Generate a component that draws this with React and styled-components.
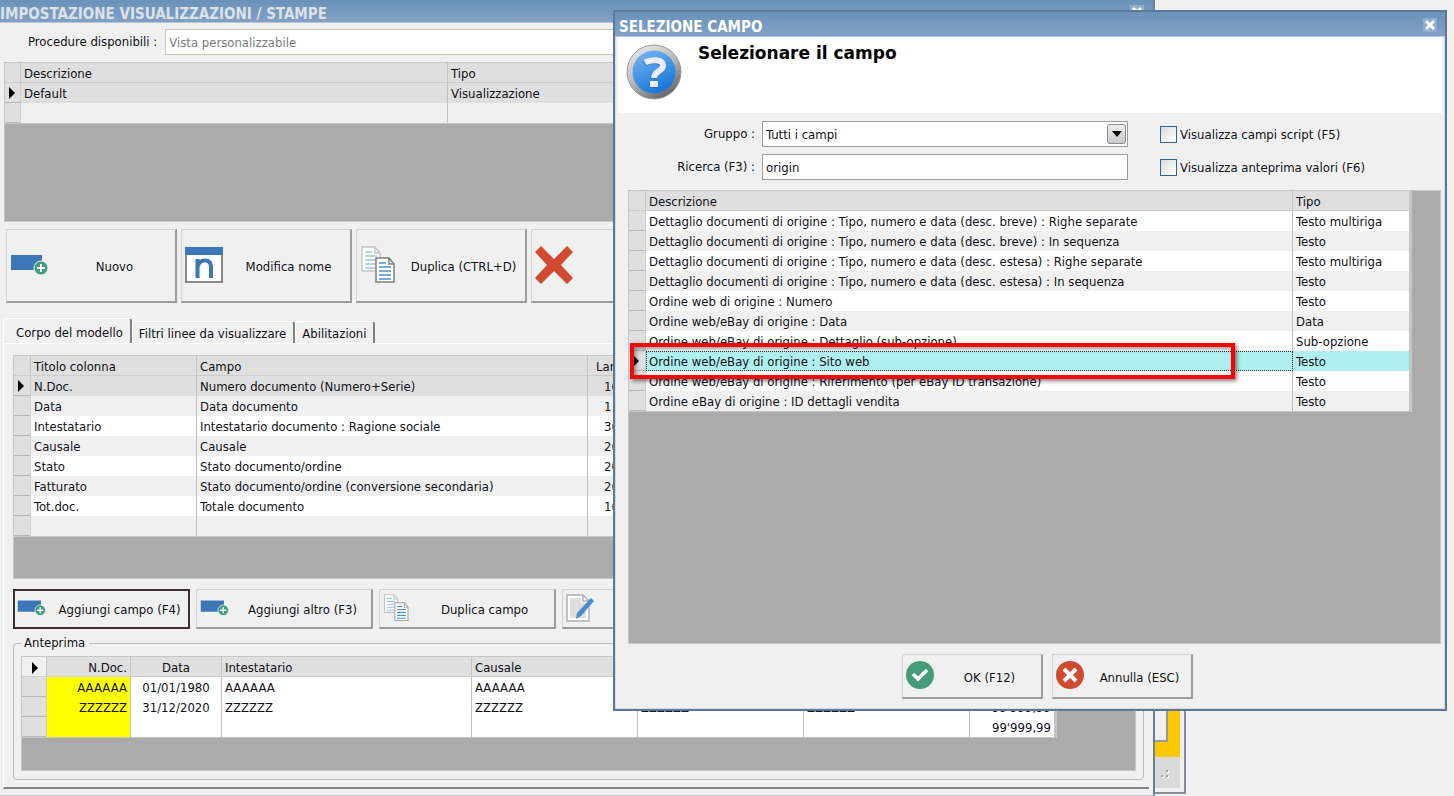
import React from 'react'
import styled, { createGlobalStyle } from 'styled-components'

const procedures = [{ descrizione: 'Default', tipo: 'Visualizzazione' }]

const columns = [
    { titolo: 'N.Doc.', campo: 'Numero documento (Numero+Serie)', largh: '10' },
    { titolo: 'Data', campo: 'Data documento', largh: '1' },
    { titolo: 'Intestatario', campo: 'Intestatario documento : Ragione sociale', largh: '30' },
    { titolo: 'Causale', campo: 'Causale', largh: '20' },
    { titolo: 'Stato', campo: 'Stato documento/ordine', largh: '20' },
    { titolo: 'Fatturato', campo: 'Stato documento/ordine (conversione secondaria)', largh: '20' },
    { titolo: 'Tot.doc.', campo: 'Totale documento', largh: '10' },
]

const preview = [
    ['AAAAAA', '01/01/1980', 'AAAAAA', 'AAAAAA', '', '', ''],
    ['ZZZZZZ', '31/12/2020', 'ZZZZZZ', 'ZZZZZZ', 'ZZZZZZ', 'ZZZZZZ', "99'999,99"],
    ['', '', '', '', '', '', "99'999,99"],
]

const fields = [
    ['Dettaglio documenti di origine : Tipo, numero e data (desc. breve) : Righe separate', 'Testo multiriga'],
    ['Dettaglio documenti di origine : Tipo, numero e data (desc. breve) : In sequenza', 'Testo'],
    ['Dettaglio documenti di origine : Tipo, numero e data (desc. estesa) : Righe separate', 'Testo multiriga'],
    ['Dettaglio documenti di origine : Tipo, numero e data (desc. estesa) : In sequenza', 'Testo'],
    ['Ordine web di origine : Numero', 'Testo'],
    ['Ordine web/eBay di origine : Data', 'Data'],
    ['Ordine web/eBay di origine : Dettaglio (sub-opzione)', 'Sub-opzione'],
    ['Ordine web/eBay di origine : Sito web', 'Testo'],
    ['Ordine web/eBay di origine : Riferimento (per eBay ID transazione)', 'Testo'],
    ['Ordine eBay di origine : ID dettagli vendita', 'Testo'],
]

const selectedField = 7

/* icons */

const AddIcon = ({ size = 40 }) => (
    <svg width={size} height={size * 0.6} viewBox="0 0 40 24" aria-hidden="true">
        <rect x="1" y="2" width="31" height="15" fill="#3c78b8" />
        <circle cx="31" cy="15" r="7" fill="#3f9c78" stroke="#f0f0f0" />
        <path d="M31 11v8M27 15h8" stroke="#fff" strokeWidth="2" />
    </svg>
)

const RenameIcon = () => (
    <svg width="38" height="36" viewBox="0 0 38 36" aria-hidden="true">
        <rect x="1" y="1" width="36" height="34" fill="#fff" stroke="#8a8a8a" strokeWidth="2" />
        <rect width="38" height="8" fill="#3c78b8" />
        <path
            d="M12.500 31V12M12.500 20C13.500 15 16.500 13.500 20 13.500C24.500 13.500 26 16 26 20V31"
            fill="none"
            stroke="#3c78b8"
            strokeWidth="4"
        />
    </svg>
)

const Sheet = ({ edge, ink }) => (
    <>
        <path d="M1 1h13l5 6v18H1z" fill="#fff" stroke={edge} strokeWidth="1.5" />
        <path d="M14 1v6h5" fill="none" stroke={edge} strokeWidth="1.5" />
        <path d="M4 6h7M4 10h12M4 14h12M4 18h12M4 22h12" stroke={ink} strokeWidth="1.5" />
    </>
)

const CopyIcon = ({ size = 36, edge = '#7f7f7f' }) => (
    <svg width={size} height={size} viewBox="0 0 36 38" aria-hidden="true">
        <Sheet edge="#c4c4c4" ink="#9cc3e8" />
        <g transform="translate(14 11)">
            <Sheet edge={edge} ink="#4f90cc" />
        </g>
    </svg>
)

const DeleteIcon = () => (
    <svg width="38" height="38" viewBox="0 0 38 38" aria-hidden="true">
        <path d="M6 0l13 13L32 0l6 6-12 13 12 13-6 6-13-13L6 38l-6-6 12-13L0 6z" fill="#cf4a2e" />
    </svg>
)

const EditIcon = () => (
    <svg width="28" height="28" viewBox="0 0 28 28" aria-hidden="true">
        <path d="M1 1h16l6 6v20H1z" fill="#fff" stroke="#b0b0b0" strokeWidth="1.5" />
        <path d="M4 4h11v5h5v15H4z" fill="#dedede" />
        <path d="M17 1v6h6" fill="none" stroke="#b0b0b0" strokeWidth="1.5" />
        <path d="M25 4l3 3-13 15-5 3 1-6z" fill="#4a8ac6" />
    </svg>
)

const QuestionIcon = () => (
    <svg width="56" height="56" viewBox="0 0 56 56" aria-hidden="true">
        <defs>
            <linearGradient id="ring" x1="0" y1="0" x2="0.6" y2="1">
                <stop offset="0" stopColor="#f4f4f4" />
                <stop offset="0.6" stopColor="#b4b4b4" />
                <stop offset="1" stopColor="#6a6a6a" />
            </linearGradient>
            <linearGradient id="ball" x1="0" y1="0" x2="0.5" y2="1">
                <stop offset="0" stopColor="#7db9f4" />
                <stop offset="1" stopColor="#1b78d8" />
            </linearGradient>
        </defs>
        <circle cx="28" cy="28" r="27" fill="url(#ring)" stroke="#9a9a9a" />
        <circle cx="28" cy="28" r="21.500" fill="url(#ball)" />
        <g fill="none" stroke="#1c62ae" strokeWidth="6" opacity="0.5" transform="translate(-1 1)">
            <path d="M19 18.500c5-3 18-4 18 3 0 6-9 5-9 12.500" />
            <path d="M24 40h8" />
        </g>
        <g fill="none" stroke="#ecebfb" strokeWidth="6">
            <path d="M19 18.500c5-3 18-4 18 3 0 6-9 5-9 12.500" />
            <path d="M24 40h8" />
        </g>
    </svg>
)

const OkIcon = () => (
    <svg width="28" height="28" viewBox="0 0 28 28" aria-hidden="true">
        <circle cx="14" cy="14" r="14" fill="#459c78" />
        <path d="M7 13l5 5 9-9" fill="none" stroke="#fff" strokeWidth="3.500" />
    </svg>
)

const CancelIcon = () => (
    <svg width="28" height="28" viewBox="0 0 28 28" aria-hidden="true">
        <circle cx="14" cy="14" r="14" fill="#cf4a2e" />
        <path d="M8 8l12 12M20 8L8 20" stroke="#fff" strokeWidth="4" />
    </svg>
)

const CloseIcon = () => (
    <svg width="14" height="14" viewBox="0 0 14 14" aria-hidden="true">
        <path d="M3 3l8 8M11 3l-8 8" stroke="#fff" strokeWidth="3" />
    </svg>
)

const Marker = () => (
    <MarkerSvg width="6" height="12" viewBox="0 0 6 12" aria-hidden="true">
        <path d="M0 0l6 6-6 6z" fill="#000" />
    </MarkerSvg>
)

const Grip = () => (
    <svg width="10" height="10" viewBox="0 0 10 10" aria-hidden="true">
        <path d="M1 7h2v2H1zM6 7h2v2H6zM6 2h2v2H6z" fill="#a5a5a5" />
        <path d="M3 8h1v2H2V9h1zM8 8h1v2H7V9h1zM8 3h1v2H7V4h1z" fill="#fff" />
    </svg>
)

const MainWindow = () => (
    <MainFrame>
        <TitleBar $muted>
            <Title $muted>IMPOSTAZIONE VISUALIZZAZIONI / STAMPE</Title>
            <CloseButton type="button" aria-label="Chiudi"><CloseIcon /></CloseButton>
        </TitleBar>
        <ProcedureRow>
            <label htmlFor="procedure">Procedure disponibili :</label>
            <TextInput id="procedure" $muted defaultValue="Vista personalizzabile" readOnly />
        </ProcedureRow>
        <GridArea $height={160} $margin="0 16px 0 4px">
            <Table $width={1110}>
                <colgroup>
                    <Col $w={16} /><Col $w={427} /><Col $w={667} />
                </colgroup>
                <thead>
                    <tr><Th /><Th>Descrizione</Th><Th>Tipo</Th></tr>
                </thead>
                <tbody>
                    {procedures.map((p) => (
                        <Row key={p.descrizione} $bg="#dfdfdf">
                            <RowHead><Marker /></RowHead>
                            <Td>{p.descrizione}</Td>
                            <Td>{p.tipo}</Td>
                        </Row>
                    ))}
                    <Row $bg="#f0f0f0"><RowHead /><Td /><Td /></Row>
                </tbody>
            </Table>
        </GridArea>
        <Toolbar>
            <PushButton type="button" $tall><AddIcon /><span>Nuovo</span></PushButton>
            <PushButton type="button" $tall><RenameIcon /><span>Modifica nome</span></PushButton>
            <PushButton type="button" $tall><CopyIcon size={38} /><span>Duplica (CTRL+D)</span></PushButton>
            <PushButton type="button" $tall aria-label="Elimina"><DeleteIcon /></PushButton>
        </Toolbar>
        <Tabs role="tablist">
            <Tab type="button" role="tab" aria-selected="true" $active>Corpo del modello</Tab>
            <Tab type="button" role="tab" aria-selected="false">Filtri linee da visualizzare</Tab>
            <Tab type="button" role="tab" aria-selected="false">Abilitazioni</Tab>
        </Tabs>
        <TabPanel role="tabpanel">
            <GridArea $height={224} $margin="0 4px 0 0">
                <Table $width={1100}>
                    <colgroup>
                        <Col $w={17} /><Col $w={166} /><Col $w={391} /><Col $w={48} /><Col $w={478} />
                    </colgroup>
                    <thead>
                        <tr><Th /><Th>Titolo colonna</Th><Th>Campo</Th><Th $pad={8}>Largh.</Th><Th /></tr>
                    </thead>
                    <tbody>
                        {columns.map((c, i) => (
                            <Row key={c.titolo} $bg={i === 0 ? '#dfdfdf' : i % 2 ? '#f0f0f0' : '#fff'}>
                                <RowHead>{i === 0 && <Marker />}</RowHead>
                                <Td>{c.titolo}</Td>
                                <Td>{c.campo}</Td>
                                <Td $pad={16}>{c.largh}</Td>
                                <Td />
                            </Row>
                        ))}
                        <Row $bg="#f0f0f0"><RowHead /><Td /><Td /><Td /><Td /></Row>
                    </tbody>
                </Table>
            </GridArea>
            <FieldToolbar>
                <PushButton type="button" $focused><AddIcon size={30} /><span>Aggiungi campo (F4)</span></PushButton>
                <PushButton type="button"><AddIcon size={30} /><span>Aggiungi altro (F3)</span></PushButton>
                <PushButton type="button"><CopyIcon size={28} edge="#a8a8a8" /><span>Duplica campo</span></PushButton>
                <PushButton type="button" aria-label="Modifica campo"><EditIcon /></PushButton>
            </FieldToolbar>
            <PreviewBox>
                <PreviewLegend>Anteprima</PreviewLegend>
                <GridArea $height={115} $margin="0">
                    <Table $width={1035}>
                        <colgroup>
                            <Col $w={25} /><Col $w={84} /><Col $w={91} /><Col $w={250} />
                            <Col $w={166} /><Col $w={166} /><Col $w={166} /><Col $w={85} />
                        </colgroup>
                        <thead>
                            <tr>
                                <Th $bg="#f0f0f0" $pad={10}><Marker /></Th>
                                <Th $align="right">N.Doc.</Th>
                                <Th $align="center">Data</Th>
                                <Th>Intestatario</Th>
                                <Th>Causale</Th>
                                <Th />
                                <Th />
                                <Th />
                            </tr>
                        </thead>
                        <tbody>
                            {preview.map((row, i) => (
                                <Row key={i} $bg="#fff">
                                    <RowHead />
                                    <Td $bg="#ff0" $align="right">{row[0]}</Td>
                                    <Td $align="center">{row[1]}</Td>
                                    <Td>{row[2]}</Td>
                                    <Td>{row[3]}</Td>
                                    <Td>{row[4]}</Td>
                                    <Td>{row[5]}</Td>
                                    <Td $align="right">{row[6]}</Td>
                                </Row>
                            ))}
                        </tbody>
                    </Table>
                </GridArea>
            </PreviewBox>
        </TabPanel>
    </MainFrame>
)

const FieldDialog = () => (
    <DialogFrame role="dialog" aria-labelledby="dialog-title">
        <TitleBar>
            <Title id="dialog-title">SELEZIONE CAMPO</Title>
            <CloseButton type="button" aria-label="Chiudi"><CloseIcon /></CloseButton>
        </TitleBar>
        <DialogHeader>
            <QuestionIcon />
            <DialogHeading>Selezionare il campo</DialogHeading>
        </DialogHeader>
        <Filters>
            <label htmlFor="gruppo">Gruppo :</label>
            <SelectWrap>
                <Select id="gruppo" defaultValue="tutti">
                    <option value="tutti">Tutti i campi</option>
                </Select>
                <SelectArrow>
                    <svg width="10" height="6" viewBox="0 0 10 6" aria-hidden="true"><path d="M0 0h10L5 6z" fill="#000" /></svg>
                </SelectArrow>
            </SelectWrap>
            <CheckLabel><CheckBox type="checkbox" />Visualizza campi script (F5)</CheckLabel>
            <label htmlFor="ricerca">Ricerca (F3) :</label>
            <TextInput id="ricerca" defaultValue="origin" />
            <CheckLabel><CheckBox type="checkbox" />Visualizza anteprima valori (F6)</CheckLabel>
        </Filters>
        <GridArea $height={454} $margin="0 4px 0 13px">
            <Table $width={783}>
                <colgroup>
                    <Col $w={17} /><Col $w={647} /><Col $w={117} />
                </colgroup>
                <thead>
                    <tr><Th /><Th>Descrizione</Th><Th>Tipo</Th></tr>
                </thead>
                <tbody>
                    {fields.map(([descrizione, tipo], i) => (
                        <Row key={descrizione} $bg={i === selectedField ? '#b0efef' : i % 2 ? '#f0f0f0' : '#fff'}>
                            <RowHead>{i === selectedField && <Marker />}</RowHead>
                            <Td $focused={i === selectedField}>{descrizione}</Td>
                            <Td>{tipo}</Td>
                        </Row>
                    ))}
                </tbody>
            </Table>
            <Highlight />
        </GridArea>
        <DialogActions>
            <PushButton type="button" $dialog><OkIcon /><span>OK (F12)</span></PushButton>
            <PushButton type="button" $dialog><CancelIcon /><span>Annulla (ESC)</span></PushButton>
        </DialogActions>
    </DialogFrame>
)

const App = () => (
    <Desktop>
        <GlobalStyle />
        <BackWindow>
            <BackContent><BackPanel /></BackContent>
            <StatusBar><Grip /></StatusBar>
        </BackWindow>
        <MainWindow />
        <FieldDialog />
    </Desktop>
)

export default App

const GlobalStyle = createGlobalStyle`
    * {
        box-sizing: border-box;
    }

    body {
        margin: 0;
        background: #f0f0f0;
        font-family: 'DejaVu Sans Condensed', 'DejaVu Sans', sans-serif;
        font-size: 13px;
        line-height: 16px;
        color: #101018;
    }

    button, input, select {
        font: inherit;
        color: inherit;
    }
`

const Desktop = styled.main`
    position: relative;
    min-height: 100vh;
    overflow: hidden;
`

const BackWindow = styled.div`
    position: absolute;
    left: 0;
    right: 268px;
    bottom: 2px;
    padding: 0 4px 4px;
    border: 2px solid #858b99;
    background: #f0f0f0;
`

const BackContent = styled.div`
    height: 700px;
    padding: 0 12px 15px 0;
    background: #fcc800;
`

const BackPanel = styled.div`
    height: 100%;
    border: solid #9a9a9a;
    border-width: 0 2px 2px 0;
    background: #f0f0f0;
`

const StatusBar = styled.div`
    display: flex;
    justify-content: flex-end;
    align-items: center;
    height: 31px;
    padding-right: 10px;
    background: #dadada;
`

const MainFrame = styled.section`
    position: absolute;
    top: 0;
    left: 0;
    right: 299px;
    padding-bottom: 6px;
    border-right: 2px solid #6b8098;
    border-bottom: 1px solid #c4c8d0;
    background: #f0f0f0;
`

const DialogFrame = styled.section`
    position: absolute;
    top: 10px;
    left: 613px;
    right: 7px;
    padding-bottom: 10px;
    border: 2px solid #5c7894;
    background: #f0f0f0;
    box-shadow: inset 0 0 0 1px #d4dbe4;
`

const TitleBar = styled.header`
    display: flex;
    align-items: center;
    justify-content: space-between;
    height: ${({ $muted }) => ($muted ? 23 : 25)}px;
    padding: ${({ $muted }) => ($muted ? '5px 9px 0 0' : '5px 8px 0 4px')};
    background: linear-gradient(#6b92ba, #82a1c4);
    border-bottom: 1px solid #b4c6da;
`

const Title = styled.h1`
    margin: 0;
    font-size: 15px;
    font-weight: bold;
    line-height: 18px;
    white-space: nowrap;
    color: ${({ $muted }) => ($muted ? '#dde2e8' : '#fff')};
`

const CloseButton = styled.button`
    display: flex;
    margin-bottom: 4px;
    padding: 0;
    border: 0;
    background: #8fadcc;
`

const ProcedureRow = styled.div`
    display: flex;
    align-items: center;
    gap: 8px;
    padding: 6px 16px 7px 28px;

    input {
        flex: 1;
    }
`

const TextInput = styled.input`
    width: 100%;
    height: 26px;
    padding: 0 3px;
    border: 1px solid ${({ $muted }) => ($muted ? '#c9c7ba' : '#9c9c9c')};
    background: #fff;
    color: ${({ $muted }) => ($muted ? '#7b7b7b' : '#101018')};
    outline: 0;
`

const GridArea = styled.div`
    position: relative;
    height: ${({ $height }) => $height}px;
    margin: ${({ $margin }) => $margin};
    overflow: hidden;
    border: 1px solid #c6c6ca;
    background: #ababab;
`

const Table = styled.table`
    width: ${({ $width }) => $width}px;
    table-layout: fixed;
    border-collapse: separate;
    border-spacing: 0;
    border-right: 2px solid #c6c6c6;
    border-bottom: 1px solid #c6c6c6;
`

const Col = styled.col`
    width: ${({ $w }) => $w}px;
`

const Th = styled.th`
    height: 20px;
    padding: 2px 3px 0 ${({ $pad = 3 }) => $pad}px;
    border-right: 1px solid #c4c4c6;
    border-bottom: 1px solid #cdcdd0;
    background: ${({ $bg = '#dfdfdf' }) => $bg};
    font-weight: normal;
    text-align: ${({ $align = 'left' }) => $align};
    white-space: nowrap;
`

const Row = styled.tr`
    background: ${({ $bg }) => $bg};
`

const Td = styled.td`
    height: 20px;
    padding: 1px 3px 0 ${({ $pad = 3 }) => $pad}px;
    border-right: 1px solid #c0c0c2;
    background: ${({ $bg }) => $bg};
    text-align: ${({ $align = 'left' }) => $align};
    white-space: nowrap;
    outline: ${({ $focused }) => ($focused ? '1px dotted #333' : '0')};
    outline-offset: -1px;
`

const RowHead = styled.td`
    height: 20px;
    padding: 0 0 0 4px;
    border-right: 1px solid #d0d0d3;
    border-bottom: 1px solid #b9b9bd;
    background: #dfdfdf;
`

const MarkerSvg = styled.svg`
    display: block;
`

const Toolbar = styled.div`
    display: flex;
    gap: 4px;
    padding: 7px 16px 15px 6px;
`

const FieldToolbar = styled.div`
    display: flex;
    gap: 6px;
    padding: 10px 0 6px;
`

const PushButton = styled.button`
    display: flex;
    align-items: center;
    width: ${({ $tall, $dialog }) => ($dialog ? 141 : $tall ? 171 : 177)}px;
    height: ${({ $tall, $dialog }) => ($dialog ? 45 : $tall ? 74 : 40)}px;
    padding: 0 0 0 3px;
    border: 2px solid #9c9c9c;
    border-top: 1px solid #d4d4d8;
    border-left: 1px solid #d4d4d8;
    background: #f0f0f0;
    outline: ${({ $focused }) => ($focused ? '2px solid #3a2e30' : '0')};
    outline-offset: -2px;

    svg {
        flex: none;
        margin-bottom: 2px;
    }

    span {
        flex: 1;
        padding: 3px 0 0 4px;
        text-align: center;
        white-space: nowrap;
    }
`

const Tabs = styled.div`
    display: flex;
    align-items: flex-end;
    padding-left: 3px;
`

const Tab = styled.button`
    height: ${({ $active }) => ($active ? 25 : 22)}px;
    padding: ${({ $active }) => ($active ? '3px 7px 0 12px' : '2px 7px 0 6px')};
    border: 1px solid #fff;
    border-right: 2px solid #808080;
    border-bottom: 0;
    border-radius: 3px 3px 0 0;
    background: #f0f0f0;
    white-space: nowrap;
`

const TabPanel = styled.div`
    margin: 0 4px 0 3px;
    padding: 11px 5px 7px 9px;
    border-top: 1px solid #fff;
    border-left: 1px solid #fff;
    border-bottom: 2px solid #868686;
`

const PreviewBox = styled.fieldset`
    min-width: 0;
    margin: 0;
    padding: 5px 7px 8px;
    border: 1px solid #bcbcbc;
    border-radius: 4px;
`

const PreviewLegend = styled.legend`
    padding: 0 4px 0 3px;
`

const DialogHeader = styled.div`
    display: flex;
    align-items: flex-start;
    gap: 16px;
    height: 76px;
    margin: 0 3px;
    padding: 7px 8px;
    background: #fff;
`

const DialogHeading = styled.h2`
    margin: 0;
    font-family: 'DejaVu Sans', sans-serif;
    font-size: 17px;
    line-height: 18px;
    color: #000;
`

const Filters = styled.div`
    display: grid;
    grid-template-columns: 140px minmax(0, 366px) auto;
    column-gap: 7px;
    row-gap: 7px;
    align-items: center;
    padding: 8px 0 10px;

    > label:not(:has(input)) {
        text-align: right;
    }
`

const SelectWrap = styled.div`
    position: relative;
`

const Select = styled.select`
    display: block;
    width: 100%;
    height: 26px;
    padding: 2px 3px 0;
    border: 1px solid #9c9c9c;
    border-radius: 0;
    background: #fff;
    appearance: none;
    outline: 0;
`

const SelectArrow = styled.span`
    position: absolute;
    top: 3px;
    right: 2px;
    display: flex;
    align-items: center;
    justify-content: center;
    width: 19px;
    height: 20px;
    border: 1px solid #8c8c8c;
    border-radius: 3px;
    background: linear-gradient(#f0f0f0, #c8c8cc);
    pointer-events: none;
`

const CheckLabel = styled.label`
    display: flex;
    align-items: center;
    gap: 3px;
    padding: 1px 0 0 25px;
    white-space: nowrap;
`

const CheckBox = styled.input`
    width: 17px;
    height: 17px;
    margin: 0;
    border: 1px solid #2f6496;
    background: linear-gradient(135deg, #dcdcd7, #fff);
    appearance: none;
`

/* red frame drawn over the selected row */
const Highlight = styled.div`
    position: absolute;
    top: 152px;
    left: 1px;
    width: 605px;
    height: 36px;
    border: 4px solid #f00;
    box-shadow: 2px 2px 4px rgba(0, 0, 0, 0.5), inset 2px 2px 4px rgba(0, 0, 0, 0.4);
    pointer-events: none;
`

const DialogActions = styled.div`
    display: flex;
    justify-content: center;
    gap: 9px;
    margin-top: 10px;
    padding-left: 35px;
`
